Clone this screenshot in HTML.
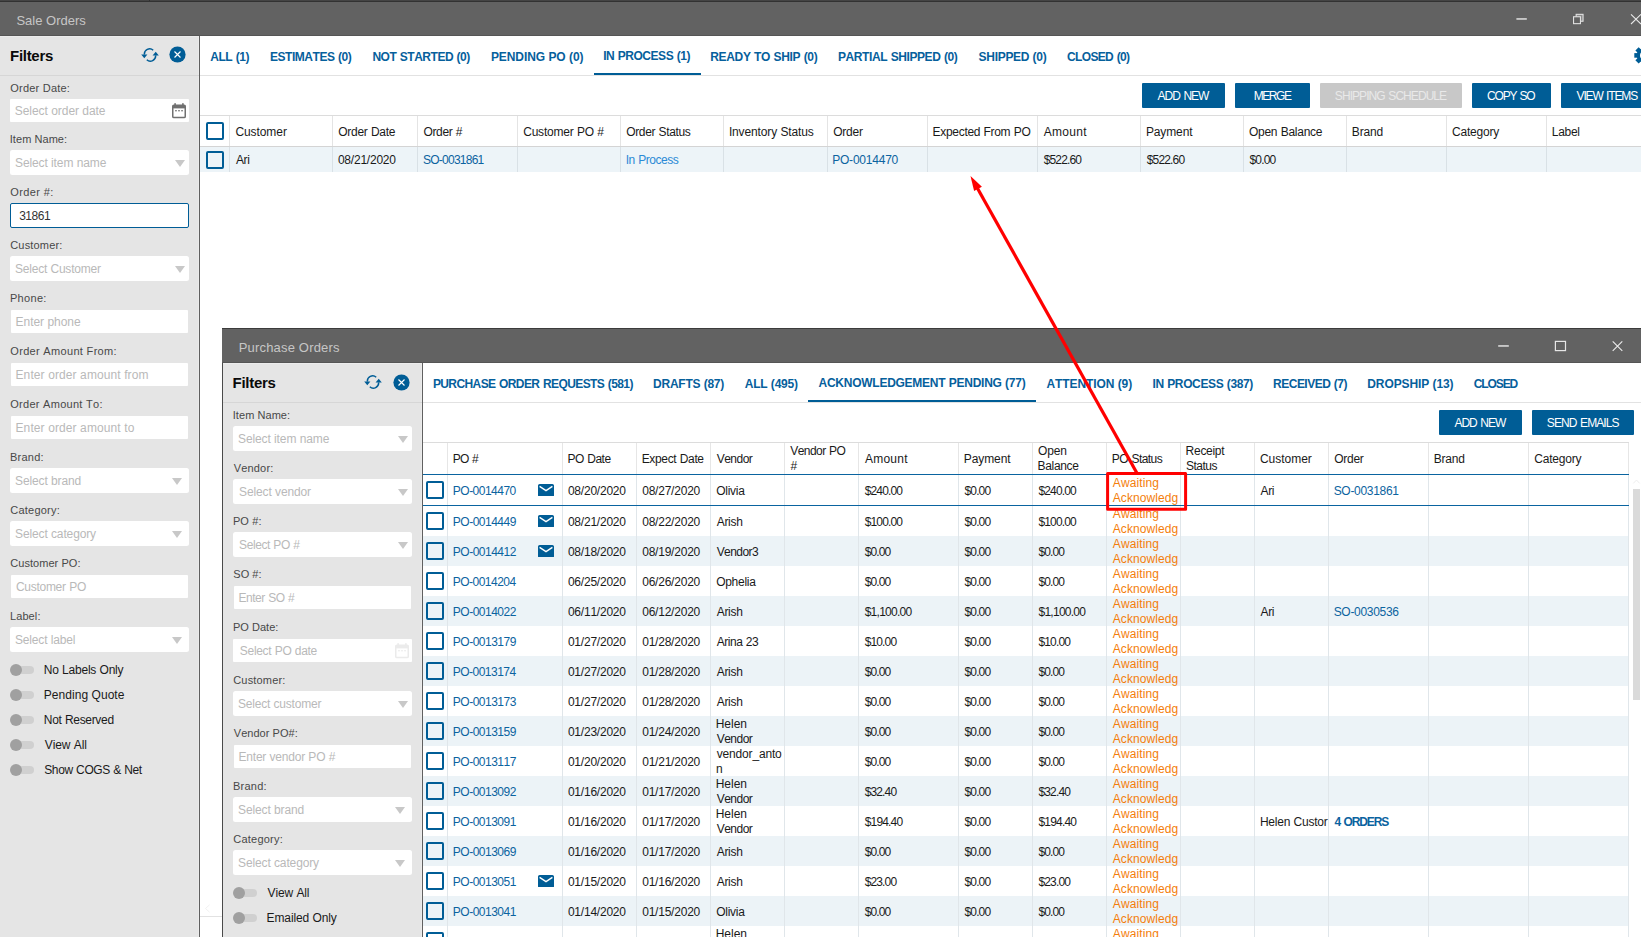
<!DOCTYPE html>
<html lang="en"><head><meta charset="utf-8"><title>Sale Orders</title>
<style>
html,body{margin:0;padding:0;background:#fff;}
body{width:1641px;height:937px;position:relative;overflow:hidden;font-family:"Liberation Sans",sans-serif;font-kerning:none;}
.t{position:absolute;white-space:nowrap;display:block;}
.b{position:absolute;display:block;box-sizing:content-box;}
</style></head>
<body>
<div class="b" style="left:0px;top:0px;width:1641px;height:1px;background:#444444;"></div>
<div class="b" style="left:0px;top:1px;width:1641px;height:1px;background:#323232;"></div>
<div class="b" style="left:149px;top:0px;width:1px;height:1px;background:#303030;"></div>
<div class="b" style="left:0px;top:2px;width:1641px;height:33px;background:#626262;"></div>
<div class="b" style="left:0px;top:35px;width:1641px;height:1px;background:#555555;"></div>
<span class="t" style="left:16.41px;top:13px;font-size:13px;line-height:16px;color:#c6c6c6;word-spacing:0.00px;">Sale Orders</span>
<svg class="b" style="left:1510px;top:8px" width="131" height="22" viewBox="0 0 131 22">
<rect x="6.4" y="10.1" width="10.4" height="1.7" fill="#d2d2d2"/>
<rect x="66.15" y="6.35" width="6.9" height="6.9" fill="#8a8a8a" stroke="#e0e0e0" stroke-width="1.1"/>
<rect x="63.55" y="8.75" width="6.9" height="6.9" fill="#626262" stroke="#e0e0e0" stroke-width="1.1"/>
<path d="M121 6.3 L131 16 M131 6.3 L121 16" stroke="#e8e8e8" stroke-width="1.1" fill="none"/>
</svg>
<div class="b" style="left:0px;top:36px;width:199px;height:901px;background:#e5e5e5;"></div>
<div class="b" style="left:0px;top:36px;width:199px;height:1px;background:#ececec;"></div>
<div class="b" style="left:198px;top:36px;width:1px;height:901px;background:#ebebeb;"></div>
<div class="b" style="left:199px;top:36px;width:1px;height:901px;background:#606060;"></div>
<div class="b" style="left:0px;top:75px;width:199px;height:1px;background:#d6d6d6;"></div>
<span class="t" style="left:10.00px;top:46px;font-size:15px;line-height:19px;color:#0a0a0a;letter-spacing:-0.283px;font-weight:700;">Filters</span>
<svg class="b" style="left:141px;top:48px" width="18" height="14" viewBox="0 0 18 14">
<path d="M3.4 6.6 A5.3 5.3 0 0 1 12.2 2.2" fill="none" stroke="#005d96" stroke-width="1.5"/>
<path d="M14.6 7.4 A5.3 5.3 0 0 1 5.8 11.8" fill="none" stroke="#005d96" stroke-width="1.5"/>
<path d="M0.2 6.6 L6.4 6.6 L3.3 10.2 Z" fill="#005d96"/>
<path d="M17.8 7.4 L11.6 7.4 L14.7 3.8 Z" fill="#005d96"/>
</svg>
<svg class="b" style="left:169.1px;top:46.1px" width="17" height="17" viewBox="0 0 17 17">
<circle cx="8.5" cy="8.5" r="8.1" fill="#005d96"/>
<path d="M5.5 5.5 L11.5 11.5 M11.5 5.5 L5.5 11.5" stroke="#fff" stroke-width="1.15" fill="none"/>
</svg>
<span class="t" style="left:10.28px;top:81px;font-size:11px;line-height:14px;color:#484848;letter-spacing:0.216px;">Order Date:</span>
<div class="b" style="left:10.2px;top:99px;width:178.9px;height:23px;background:#fff;border-radius:1px;"></div>
<span class="t" style="left:14.76px;top:104px;font-size:12px;line-height:15px;color:#b9b9b9;letter-spacing:-0.046px;word-spacing:0.06px;">Select order date</span>
<svg class="b" style="left:172px;top:102.8px" width="14" height="16" viewBox="0 0 14 16">
<rect x="0.75" y="2.2" width="12.5" height="12.4" rx="1.2" fill="none" stroke="#707070" stroke-width="1.5"/>
<rect x="0.75" y="2.2" width="12.5" height="3.2" fill="#707070"/>
<rect x="2.3" y="0.2" width="1.6" height="3" fill="#707070"/>
<rect x="10.1" y="0.2" width="1.6" height="3" fill="#707070"/>
<rect x="3.0" y="7.2" width="1.9" height="1.1" fill="#707070"/>
<rect x="6.05" y="7.2" width="1.9" height="1.1" fill="#707070"/>
<rect x="9.1" y="7.2" width="1.9" height="1.1" fill="#707070"/>
</svg>
<span class="t" style="left:9.78px;top:132px;font-size:11px;line-height:14px;color:#484848;letter-spacing:0.052px;">Item Name:</span>
<div class="b" style="left:10px;top:150.2px;width:179px;height:24.7px;background:#fff;border-radius:2.5px;"></div>
<span class="t" style="left:15.06px;top:156px;font-size:12px;line-height:15px;color:#b9b9b9;letter-spacing:-0.116px;word-spacing:0.15px;">Select item name</span>
<svg class="b" style="left:175.2px;top:160.2px" width="10" height="7" viewBox="0 0 10 7"><path d="M0 0 L10 0 L5 7 Z" fill="#c8c8c8"/></svg>
<span class="t" style="left:10.28px;top:185px;font-size:11px;line-height:14px;color:#484848;letter-spacing:0.397px;">Order #:</span>
<div class="b" style="left:10px;top:203px;width:177px;height:22.5px;background:#fff;border:1px solid #005d96;border-radius:2px;"></div>
<span class="t" style="left:19.14px;top:209px;font-size:12px;line-height:15px;color:#333;letter-spacing:-0.457px;">31861</span>
<span class="t" style="left:10.24px;top:238px;font-size:11px;line-height:14px;color:#484848;letter-spacing:0.166px;">Customer:</span>
<div class="b" style="left:10px;top:256.2px;width:179px;height:24.7px;background:#fff;border-radius:2.5px;"></div>
<span class="t" style="left:15.06px;top:262px;font-size:12px;line-height:15px;color:#b9b9b9;letter-spacing:-0.227px;word-spacing:0.33px;">Select Customer</span>
<svg class="b" style="left:175.2px;top:266.2px" width="10" height="7" viewBox="0 0 10 7"><path d="M0 0 L10 0 L5 7 Z" fill="#c8c8c8"/></svg>
<span class="t" style="left:9.90px;top:291px;font-size:11px;line-height:14px;color:#484848;letter-spacing:0.329px;">Phone:</span>
<div class="b" style="left:10.7px;top:310.2px;width:177.5px;height:23px;background:#fff;border-radius:1px;"></div>
<span class="t" style="left:15.52px;top:315px;font-size:12px;line-height:15px;color:#b9b9b9;letter-spacing:-0.031px;word-spacing:0.04px;">Enter phone</span>
<span class="t" style="left:10.28px;top:344px;font-size:11px;line-height:14px;color:#484848;letter-spacing:0.322px;">Order Amount From:</span>
<div class="b" style="left:10.7px;top:363.2px;width:177.5px;height:23px;background:#fff;border-radius:1px;"></div>
<span class="t" style="left:15.52px;top:368px;font-size:12px;line-height:15px;color:#b9b9b9;letter-spacing:0.102px;">Enter order amount from</span>
<span class="t" style="left:10.28px;top:397px;font-size:11px;line-height:14px;color:#484848;letter-spacing:0.280px;">Order Amount To:</span>
<div class="b" style="left:10.7px;top:416.2px;width:177.5px;height:23px;background:#fff;border-radius:1px;"></div>
<span class="t" style="left:15.52px;top:421px;font-size:12px;line-height:15px;color:#b9b9b9;letter-spacing:0.103px;">Enter order amount to</span>
<span class="t" style="left:9.90px;top:450px;font-size:11px;line-height:14px;color:#484848;letter-spacing:0.260px;">Brand:</span>
<div class="b" style="left:10px;top:468.2px;width:179px;height:24.7px;background:#fff;border-radius:2.5px;"></div>
<span class="t" style="left:15.06px;top:474px;font-size:12px;line-height:15px;color:#b9b9b9;letter-spacing:-0.121px;word-spacing:0.17px;">Select brand</span>
<svg class="b" style="left:171.5px;top:478.2px" width="10" height="7" viewBox="0 0 10 7"><path d="M0 0 L10 0 L5 7 Z" fill="#c8c8c8"/></svg>
<span class="t" style="left:10.24px;top:503px;font-size:11px;line-height:14px;color:#484848;letter-spacing:0.234px;">Category:</span>
<div class="b" style="left:10px;top:521.2px;width:179px;height:24.7px;background:#fff;border-radius:2.5px;"></div>
<span class="t" style="left:15.06px;top:527px;font-size:12px;line-height:15px;color:#b9b9b9;letter-spacing:-0.131px;word-spacing:0.19px;">Select category</span>
<svg class="b" style="left:171.5px;top:531.2px" width="10" height="7" viewBox="0 0 10 7"><path d="M0 0 L10 0 L5 7 Z" fill="#c8c8c8"/></svg>
<span class="t" style="left:10.24px;top:556px;font-size:11px;line-height:14px;color:#484848;letter-spacing:0.053px;">Customer PO:</span>
<div class="b" style="left:10.7px;top:575px;width:177.5px;height:23px;background:#fff;border-radius:1px;"></div>
<span class="t" style="left:15.89px;top:580px;font-size:12px;line-height:15px;color:#b9b9b9;letter-spacing:-0.267px;word-spacing:0.37px;">Customer PO</span>
<span class="t" style="left:9.90px;top:609px;font-size:11px;line-height:14px;color:#484848;letter-spacing:0.127px;">Label:</span>
<div class="b" style="left:10px;top:627.3px;width:179px;height:24.7px;background:#fff;border-radius:2.5px;"></div>
<span class="t" style="left:15.06px;top:633px;font-size:12px;line-height:15px;color:#b9b9b9;letter-spacing:-0.176px;word-spacing:0.25px;">Select label</span>
<svg class="b" style="left:171.5px;top:637.3px" width="10" height="7" viewBox="0 0 10 7"><path d="M0 0 L10 0 L5 7 Z" fill="#c8c8c8"/></svg>
<div class="b" style="left:14px;top:666px;width:20px;height:8px;background:#d0d0d0;border-radius:4px;"></div>
<div class="b" style="left:10px;top:664px;width:12px;height:12px;background:#a0a0a0;border-radius:6px;"></div>
<span class="t" style="left:43.82px;top:663px;font-size:12px;line-height:15px;color:#1a1a1a;letter-spacing:-0.224px;word-spacing:0.29px;">No Labels Only</span>
<div class="b" style="left:14px;top:691px;width:20px;height:8px;background:#d0d0d0;border-radius:4px;"></div>
<div class="b" style="left:10px;top:689px;width:12px;height:12px;background:#a0a0a0;border-radius:6px;"></div>
<span class="t" style="left:43.82px;top:688px;font-size:12px;line-height:15px;color:#1a1a1a;letter-spacing:0.046px;">Pending Quote</span>
<div class="b" style="left:14px;top:716px;width:20px;height:8px;background:#d0d0d0;border-radius:4px;"></div>
<div class="b" style="left:10px;top:714px;width:12px;height:12px;background:#a0a0a0;border-radius:6px;"></div>
<span class="t" style="left:43.82px;top:713px;font-size:12px;line-height:15px;color:#1a1a1a;letter-spacing:-0.324px;word-spacing:0.45px;">Not Reserved</span>
<div class="b" style="left:14px;top:741px;width:20px;height:8px;background:#d0d0d0;border-radius:4px;"></div>
<div class="b" style="left:10px;top:739px;width:12px;height:12px;background:#a0a0a0;border-radius:6px;"></div>
<span class="t" style="left:44.75px;top:738px;font-size:12px;line-height:15px;color:#1a1a1a;letter-spacing:-0.092px;word-spacing:0.12px;">View All</span>
<div class="b" style="left:14px;top:766px;width:20px;height:8px;background:#d0d0d0;border-radius:4px;"></div>
<div class="b" style="left:10px;top:764px;width:12px;height:12px;background:#a0a0a0;border-radius:6px;"></div>
<span class="t" style="left:44.26px;top:763px;font-size:12px;line-height:15px;color:#1a1a1a;letter-spacing:-0.393px;word-spacing:0.47px;">Show COGS &amp; Net</span>
<div class="b" style="left:200px;top:75px;width:1441px;height:1px;background:#e2e2e2;"></div>
<span class="t" style="left:210.30px;top:50px;font-size:12px;line-height:15px;color:#06609c;letter-spacing:-0.471px;word-spacing:0.59px;font-weight:700;">ALL (1)</span>
<span class="t" style="left:270.00px;top:50px;font-size:12px;line-height:15px;color:#06609c;letter-spacing:-0.460px;word-spacing:0.65px;font-weight:700;">ESTIMATES (0)</span>
<span class="t" style="left:372.40px;top:50px;font-size:12px;line-height:15px;color:#06609c;letter-spacing:-0.476px;word-spacing:0.62px;font-weight:700;">NOT STARTED (0)</span>
<span class="t" style="left:490.90px;top:50px;font-size:12px;line-height:15px;color:#06609c;letter-spacing:-0.071px;word-spacing:0.09px;font-weight:700;">PENDING PO (0)</span>
<span class="t" style="left:710.20px;top:50px;font-size:12px;line-height:15px;color:#06609c;letter-spacing:-0.312px;word-spacing:0.38px;font-weight:700;">READY TO SHIP (0)</span>
<span class="t" style="left:838.00px;top:50px;font-size:12px;line-height:15px;color:#06609c;letter-spacing:-0.406px;word-spacing:0.55px;font-weight:700;">PARTIAL SHIPPED (0)</span>
<span class="t" style="left:978.55px;top:50px;font-size:12px;line-height:15px;color:#06609c;letter-spacing:-0.294px;word-spacing:0.41px;font-weight:700;">SHIPPED (0)</span>
<span class="t" style="left:1067.01px;top:50px;font-size:12px;line-height:15px;color:#06609c;letter-spacing:-0.643px;word-spacing:0.87px;font-weight:700;">CLOSED (0)</span>
<span class="t" style="left:603.20px;top:49px;font-size:12px;line-height:15px;color:#06609c;letter-spacing:-0.462px;word-spacing:0.59px;font-weight:700;">IN PROCESS (1)</span>
<div class="b" style="left:594px;top:72.6px;width:106.5px;height:2.6px;background:#005d96;"></div>
<svg class="b" style="left:1633px;top:45px" width="8" height="21" viewBox="0 0 8 21">
<g transform="translate(10.6,10.4)" fill="#005d96">
<circle r="6.9"/>
<g id="gt"><rect x="-2.3" y="-9.3" width="4.6" height="4" /></g>
<use href="#gt" transform="rotate(45)"/><use href="#gt" transform="rotate(90)"/><use href="#gt" transform="rotate(135)"/>
<use href="#gt" transform="rotate(180)"/><use href="#gt" transform="rotate(225)"/><use href="#gt" transform="rotate(270)"/><use href="#gt" transform="rotate(315)"/>
<circle r="3.6" fill="#fff"/>
</g></svg>
<div class="b" style="left:1142px;top:83.2px;width:83px;height:24.6px;background:#005d96;border-radius:1px;"></div>
<span class="t" style="left:1157.58px;top:89px;font-size:12px;line-height:15px;color:#fff;letter-spacing:-1.000px;word-spacing:1.20px;">ADD NEW</span>
<div class="b" style="left:1235px;top:83.2px;width:75px;height:24.6px;background:#005d96;border-radius:1px;"></div>
<span class="t" style="left:1253.72px;top:89px;font-size:12px;line-height:15px;color:#fff;letter-spacing:-1.451px;">MERGE</span>
<div class="b" style="left:1320px;top:83.2px;width:142px;height:24.6px;background:#c8c8c8;border-radius:1px;"></div>
<span class="t" style="left:1334.86px;top:89px;font-size:12px;line-height:15px;color:#e9e9e9;letter-spacing:-0.936px;word-spacing:1.20px;">SHIPPING SCHEDULE</span>
<div class="b" style="left:1472px;top:83.2px;width:79px;height:24.6px;background:#005d96;border-radius:1px;"></div>
<span class="t" style="left:1487.09px;top:89px;font-size:12px;line-height:15px;color:#fff;letter-spacing:-1.216px;word-spacing:1.20px;">COPY SO</span>
<div class="b" style="left:1561px;top:83.2px;width:92px;height:24.6px;background:#005d96;border-radius:1px;"></div>
<span class="t" style="left:1576.55px;top:89px;font-size:12px;line-height:15px;color:#fff;letter-spacing:-1.141px;word-spacing:1.20px;">VIEW ITEMS</span>
<div class="b" style="left:200px;top:115px;width:1441px;height:1px;background:#dcdcdc;"></div>
<div class="b" style="left:200px;top:146px;width:1441px;height:1px;background:#d4d4d4;"></div>
<div class="b" style="left:200px;top:147px;width:1441px;height:24.6px;background:#edf4f8;"></div>
<div class="b" style="left:229.4px;top:116px;width:1px;height:30px;background:#e4e4e4;"></div>
<div class="b" style="left:229.4px;top:147px;width:1px;height:24.6px;background:#d9e1e6;"></div>
<div class="b" style="left:332.4px;top:116px;width:1px;height:30px;background:#e4e4e4;"></div>
<div class="b" style="left:332.4px;top:147px;width:1px;height:24.6px;background:#d9e1e6;"></div>
<div class="b" style="left:417.4px;top:116px;width:1px;height:30px;background:#e4e4e4;"></div>
<div class="b" style="left:417.4px;top:147px;width:1px;height:24.6px;background:#d9e1e6;"></div>
<div class="b" style="left:517.4px;top:116px;width:1px;height:30px;background:#e4e4e4;"></div>
<div class="b" style="left:517.4px;top:147px;width:1px;height:24.6px;background:#d9e1e6;"></div>
<div class="b" style="left:620.4px;top:116px;width:1px;height:30px;background:#e4e4e4;"></div>
<div class="b" style="left:620.4px;top:147px;width:1px;height:24.6px;background:#d9e1e6;"></div>
<div class="b" style="left:723.4px;top:116px;width:1px;height:30px;background:#e4e4e4;"></div>
<div class="b" style="left:723.4px;top:147px;width:1px;height:24.6px;background:#d9e1e6;"></div>
<div class="b" style="left:827.4px;top:116px;width:1px;height:30px;background:#e4e4e4;"></div>
<div class="b" style="left:827.4px;top:147px;width:1px;height:24.6px;background:#d9e1e6;"></div>
<div class="b" style="left:927.4px;top:116px;width:1px;height:30px;background:#e4e4e4;"></div>
<div class="b" style="left:927.4px;top:147px;width:1px;height:24.6px;background:#d9e1e6;"></div>
<div class="b" style="left:1037.4px;top:116px;width:1px;height:30px;background:#e4e4e4;"></div>
<div class="b" style="left:1037.4px;top:147px;width:1px;height:24.6px;background:#d9e1e6;"></div>
<div class="b" style="left:1140.4px;top:116px;width:1px;height:30px;background:#e4e4e4;"></div>
<div class="b" style="left:1140.4px;top:147px;width:1px;height:24.6px;background:#d9e1e6;"></div>
<div class="b" style="left:1243.4px;top:116px;width:1px;height:30px;background:#e4e4e4;"></div>
<div class="b" style="left:1243.4px;top:147px;width:1px;height:24.6px;background:#d9e1e6;"></div>
<div class="b" style="left:1346.4px;top:116px;width:1px;height:30px;background:#e4e4e4;"></div>
<div class="b" style="left:1346.4px;top:147px;width:1px;height:24.6px;background:#d9e1e6;"></div>
<div class="b" style="left:1446.4px;top:116px;width:1px;height:30px;background:#e4e4e4;"></div>
<div class="b" style="left:1446.4px;top:147px;width:1px;height:24.6px;background:#d9e1e6;"></div>
<div class="b" style="left:1546.4px;top:116px;width:1px;height:30px;background:#e4e4e4;"></div>
<div class="b" style="left:1546.4px;top:147px;width:1px;height:24.6px;background:#d9e1e6;"></div>
<div class="b" style="left:206px;top:122px;width:14px;height:14px;border:2px solid #005d96;border-radius:2px;"></div>
<div class="b" style="left:206px;top:151px;width:14px;height:14px;border:2px solid #005d96;border-radius:2px;"></div>
<span class="t" style="left:235.39px;top:125px;font-size:12px;line-height:15px;color:#1a1a1a;letter-spacing:-0.072px;">Customer</span>
<span class="t" style="left:338.33px;top:125px;font-size:12px;line-height:15px;color:#1a1a1a;letter-spacing:-0.295px;word-spacing:0.40px;">Order Date</span>
<span class="t" style="left:423.43px;top:125px;font-size:12px;line-height:15px;color:#1a1a1a;letter-spacing:-0.328px;word-spacing:0.41px;">Order #</span>
<span class="t" style="left:523.19px;top:125px;font-size:12px;line-height:15px;color:#1a1a1a;letter-spacing:-0.214px;word-spacing:0.27px;">Customer PO #</span>
<span class="t" style="left:626.23px;top:125px;font-size:12px;line-height:15px;color:#1a1a1a;letter-spacing:-0.357px;word-spacing:0.50px;">Order Status</span>
<span class="t" style="left:728.89px;top:125px;font-size:12px;line-height:15px;color:#1a1a1a;letter-spacing:-0.138px;word-spacing:0.20px;">Inventory Status</span>
<span class="t" style="left:833.13px;top:125px;font-size:12px;line-height:15px;color:#1a1a1a;letter-spacing:-0.227px;">Order</span>
<span class="t" style="left:932.62px;top:125px;font-size:12px;line-height:15px;color:#1a1a1a;letter-spacing:-0.314px;word-spacing:0.41px;">Expected From PO</span>
<span class="t" style="left:1043.78px;top:125px;font-size:12px;line-height:15px;color:#1a1a1a;letter-spacing:0.271px;">Amount</span>
<span class="t" style="left:1145.92px;top:125px;font-size:12px;line-height:15px;color:#1a1a1a;letter-spacing:-0.114px;">Payment</span>
<span class="t" style="left:1249.03px;top:125px;font-size:12px;line-height:15px;color:#1a1a1a;letter-spacing:-0.276px;word-spacing:0.39px;">Open Balance</span>
<span class="t" style="left:1351.82px;top:125px;font-size:12px;line-height:15px;color:#1a1a1a;letter-spacing:-0.191px;">Brand</span>
<span class="t" style="left:1451.99px;top:125px;font-size:12px;line-height:15px;color:#1a1a1a;letter-spacing:-0.194px;">Category</span>
<span class="t" style="left:1551.82px;top:125px;font-size:12px;line-height:15px;color:#1a1a1a;letter-spacing:-0.294px;">Label</span>
<span class="t" style="left:235.98px;top:153px;font-size:12px;line-height:15px;color:#1a1a1a;letter-spacing:-0.417px;">Ari</span>
<span class="t" style="left:337.93px;top:153px;font-size:12px;line-height:15px;color:#1a1a1a;letter-spacing:-0.225px;">08/21/2020</span>
<span class="t" style="left:423.06px;top:153px;font-size:12px;line-height:15px;color:#0b63a0;letter-spacing:-0.758px;">SO-0031861</span>
<span class="t" style="left:625.69px;top:153px;font-size:12px;line-height:15px;color:#2b8ad6;letter-spacing:-0.477px;word-spacing:0.65px;">In Process</span>
<span class="t" style="left:832.22px;top:153px;font-size:12px;line-height:15px;color:#0b63a0;letter-spacing:-0.222px;">PO-0014470</span>
<span class="t" style="left:1043.67px;top:153px;font-size:12px;line-height:15px;color:#1a1a1a;letter-spacing:-0.847px;">$522.60</span>
<span class="t" style="left:1146.77px;top:153px;font-size:12px;line-height:15px;color:#1a1a1a;letter-spacing:-0.847px;">$522.60</span>
<span class="t" style="left:1249.47px;top:153px;font-size:12px;line-height:15px;color:#1a1a1a;letter-spacing:-0.808px;">$0.00</span>
<div class="b" style="left:200px;top:916px;width:22px;height:1px;background:#e2e2e2;"></div>
<svg class="b" style="left:204px;top:904px" width="7" height="9" viewBox="0 0 7 9"><path d="M5.6 0.8 L1.5 4.5 L5.6 8.2" fill="none" stroke="#f1f1f1" stroke-width="1"/></svg>
<div class="b" style="left:222px;top:328px;width:1419px;height:609px;background:#fff;"></div>
<div class="b" style="left:222px;top:328px;width:1px;height:609px;background:#4a4a4a;"></div>
<div class="b" style="left:222px;top:328px;width:1419px;height:34px;background:#626262;border-top:1px solid #3c3c3c;box-sizing:border-box;"></div>
<div class="b" style="left:222px;top:362px;width:1419px;height:1px;background:#555555;"></div>
<span class="t" style="left:238.73px;top:340px;font-size:13px;line-height:16px;color:#c6c6c6;letter-spacing:0.177px;">Purchase Orders</span>
<svg class="b" style="left:1490px;top:336px" width="140" height="20" viewBox="0 0 140 20">
<rect x="8.2" y="9.1" width="10.6" height="1.7" fill="#d2d2d2"/>
<rect x="65.4" y="5.4" width="10.1" height="9.2" fill="none" stroke="#e6e6e6" stroke-width="1.2"/>
<path d="M122.7 5.3 L132.3 14.9 M132.3 5.3 L122.7 14.9" stroke="#ececec" stroke-width="1.1" fill="none"/>
</svg>
<div class="b" style="left:223px;top:363px;width:199px;height:574px;background:#e5e5e5;"></div>
<div class="b" style="left:223px;top:363px;width:199px;height:1px;background:#ececec;"></div>
<div class="b" style="left:421px;top:363px;width:1px;height:574px;background:#ebebeb;"></div>
<div class="b" style="left:422px;top:363px;width:1px;height:574px;background:#606060;"></div>
<div class="b" style="left:223px;top:402px;width:199px;height:1px;background:#d6d6d6;"></div>
<span class="t" style="left:232.60px;top:373px;font-size:15px;line-height:19px;color:#0a0a0a;letter-spacing:-0.283px;font-weight:700;">Filters</span>
<svg class="b" style="left:364.2px;top:375.2px" width="18" height="14" viewBox="0 0 18 14">
<path d="M3.4 6.6 A5.3 5.3 0 0 1 12.2 2.2" fill="none" stroke="#005d96" stroke-width="1.5"/>
<path d="M14.6 7.4 A5.3 5.3 0 0 1 5.8 11.8" fill="none" stroke="#005d96" stroke-width="1.5"/>
<path d="M0.2 6.6 L6.4 6.6 L3.3 10.2 Z" fill="#005d96"/>
<path d="M17.8 7.4 L11.6 7.4 L14.7 3.8 Z" fill="#005d96"/>
</svg>
<svg class="b" style="left:392.8px;top:373.6px" width="17" height="17" viewBox="0 0 17 17">
<circle cx="8.5" cy="8.5" r="8.1" fill="#005d96"/>
<path d="M5.5 5.5 L11.5 11.5 M11.5 5.5 L5.5 11.5" stroke="#fff" stroke-width="1.15" fill="none"/>
</svg>
<span class="t" style="left:232.78px;top:408px;font-size:11px;line-height:14px;color:#484848;letter-spacing:0.052px;">Item Name:</span>
<div class="b" style="left:233px;top:426px;width:179px;height:24.7px;background:#fff;border-radius:2.5px;"></div>
<span class="t" style="left:238.06px;top:432px;font-size:12px;line-height:15px;color:#b9b9b9;letter-spacing:-0.116px;word-spacing:0.15px;">Select item name</span>
<svg class="b" style="left:398.2px;top:436px" width="10" height="7" viewBox="0 0 10 7"><path d="M0 0 L10 0 L5 7 Z" fill="#c8c8c8"/></svg>
<span class="t" style="left:233.75px;top:461px;font-size:11px;line-height:14px;color:#484848;letter-spacing:0.171px;">Vendor:</span>
<div class="b" style="left:233px;top:479.2px;width:179px;height:24.7px;background:#fff;border-radius:2.5px;"></div>
<span class="t" style="left:239.06px;top:485px;font-size:12px;line-height:15px;color:#b9b9b9;letter-spacing:-0.126px;word-spacing:0.18px;">Select vendor</span>
<svg class="b" style="left:398.2px;top:489.2px" width="10" height="7" viewBox="0 0 10 7"><path d="M0 0 L10 0 L5 7 Z" fill="#c8c8c8"/></svg>
<span class="t" style="left:232.90px;top:514px;font-size:11px;line-height:14px;color:#484848;letter-spacing:0.121px;">PO #:</span>
<div class="b" style="left:233px;top:532.2px;width:179px;height:24.7px;background:#fff;border-radius:2.5px;"></div>
<span class="t" style="left:239.06px;top:538px;font-size:12px;line-height:15px;color:#b9b9b9;letter-spacing:-0.413px;word-spacing:0.50px;">Select PO #</span>
<svg class="b" style="left:398.2px;top:542.2px" width="10" height="7" viewBox="0 0 10 7"><path d="M0 0 L10 0 L5 7 Z" fill="#c8c8c8"/></svg>
<span class="t" style="left:233.30px;top:567px;font-size:11px;line-height:14px;color:#484848;letter-spacing:0.020px;">SO #:</span>
<div class="b" style="left:233.7px;top:586px;width:177.5px;height:23px;background:#fff;border-radius:1px;"></div>
<span class="t" style="left:238.52px;top:591px;font-size:12px;line-height:15px;color:#b9b9b9;letter-spacing:-0.485px;word-spacing:0.57px;">Enter SO #</span>
<span class="t" style="left:232.90px;top:620px;font-size:11px;line-height:14px;color:#484848;letter-spacing:0.038px;">PO Date:</span>
<div class="b" style="left:233.2px;top:639px;width:178.9px;height:23px;background:#fff;border-radius:1px;"></div>
<span class="t" style="left:239.86px;top:644px;font-size:12px;line-height:15px;color:#b9b9b9;letter-spacing:-0.320px;word-spacing:0.41px;">Select PO date</span>
<svg class="b" style="left:395px;top:642.8px" width="14" height="16" viewBox="0 0 14 16">
<rect x="0.75" y="2.2" width="12.5" height="12.4" rx="1.2" fill="none" stroke="#ebebeb" stroke-width="1.5"/>
<rect x="0.75" y="2.2" width="12.5" height="3.2" fill="#ebebeb"/>
<rect x="2.3" y="0.2" width="1.6" height="3" fill="#ebebeb"/>
<rect x="10.1" y="0.2" width="1.6" height="3" fill="#ebebeb"/>
<rect x="3.0" y="7.2" width="1.9" height="1.1" fill="#ebebeb"/>
<rect x="6.05" y="7.2" width="1.9" height="1.1" fill="#ebebeb"/>
<rect x="9.1" y="7.2" width="1.9" height="1.1" fill="#ebebeb"/>
</svg>
<span class="t" style="left:233.24px;top:673px;font-size:11px;line-height:14px;color:#484848;letter-spacing:0.166px;">Customer:</span>
<div class="b" style="left:233px;top:691.3px;width:179px;height:24.7px;background:#fff;border-radius:2.5px;"></div>
<span class="t" style="left:238.06px;top:697px;font-size:12px;line-height:15px;color:#b9b9b9;letter-spacing:-0.214px;word-spacing:0.31px;">Select customer</span>
<svg class="b" style="left:398.2px;top:701.3px" width="10" height="7" viewBox="0 0 10 7"><path d="M0 0 L10 0 L5 7 Z" fill="#c8c8c8"/></svg>
<span class="t" style="left:233.75px;top:726px;font-size:11px;line-height:14px;color:#484848;letter-spacing:0.046px;">Vendor PO#:</span>
<div class="b" style="left:233.7px;top:745px;width:177.5px;height:23px;background:#fff;border-radius:1px;"></div>
<span class="t" style="left:238.52px;top:750px;font-size:12px;line-height:15px;color:#b9b9b9;letter-spacing:-0.207px;word-spacing:0.25px;">Enter vendor PO #</span>
<span class="t" style="left:232.90px;top:779px;font-size:11px;line-height:14px;color:#484848;letter-spacing:0.260px;">Brand:</span>
<div class="b" style="left:233px;top:797.4px;width:179px;height:24.7px;background:#fff;border-radius:2.5px;"></div>
<span class="t" style="left:238.06px;top:803px;font-size:12px;line-height:15px;color:#b9b9b9;letter-spacing:-0.121px;word-spacing:0.17px;">Select brand</span>
<svg class="b" style="left:394.5px;top:807.4px" width="10" height="7" viewBox="0 0 10 7"><path d="M0 0 L10 0 L5 7 Z" fill="#c8c8c8"/></svg>
<span class="t" style="left:233.24px;top:832px;font-size:11px;line-height:14px;color:#484848;letter-spacing:0.234px;">Category:</span>
<div class="b" style="left:233px;top:850.3px;width:179px;height:24.7px;background:#fff;border-radius:2.5px;"></div>
<span class="t" style="left:238.06px;top:856px;font-size:12px;line-height:15px;color:#b9b9b9;letter-spacing:-0.131px;word-spacing:0.19px;">Select category</span>
<svg class="b" style="left:394.5px;top:860.3px" width="10" height="7" viewBox="0 0 10 7"><path d="M0 0 L10 0 L5 7 Z" fill="#c8c8c8"/></svg>
<div class="b" style="left:237px;top:889px;width:20px;height:8px;background:#d0d0d0;border-radius:4px;"></div>
<div class="b" style="left:233px;top:887px;width:12px;height:12px;background:#a0a0a0;border-radius:6px;"></div>
<span class="t" style="left:267.55px;top:886px;font-size:12px;line-height:15px;color:#1a1a1a;letter-spacing:-0.127px;word-spacing:0.17px;">View All</span>
<div class="b" style="left:237px;top:914px;width:20px;height:8px;background:#d0d0d0;border-radius:4px;"></div>
<div class="b" style="left:233px;top:912px;width:12px;height:12px;background:#a0a0a0;border-radius:6px;"></div>
<span class="t" style="left:266.62px;top:911px;font-size:12px;line-height:15px;color:#1a1a1a;letter-spacing:-0.120px;word-spacing:0.17px;">Emailed Only</span>
<div class="b" style="left:423px;top:402px;width:1218px;height:1px;background:#e2e2e2;"></div>
<span class="t" style="left:432.90px;top:377px;font-size:12px;line-height:15px;color:#06609c;letter-spacing:-0.594px;word-spacing:0.81px;font-weight:700;">PURCHASE ORDER REQUESTS (581)</span>
<span class="t" style="left:653.10px;top:377px;font-size:12px;line-height:15px;color:#06609c;letter-spacing:-0.248px;word-spacing:0.34px;font-weight:700;">DRAFTS (87)</span>
<span class="t" style="left:744.80px;top:377px;font-size:12px;line-height:15px;color:#06609c;letter-spacing:-0.222px;word-spacing:0.30px;font-weight:700;">ALL (495)</span>
<span class="t" style="left:1046.40px;top:377px;font-size:12px;line-height:15px;color:#06609c;letter-spacing:-0.082px;word-spacing:0.12px;font-weight:700;">ATTENTION (9)</span>
<span class="t" style="left:1152.50px;top:377px;font-size:12px;line-height:15px;color:#06609c;letter-spacing:-0.369px;word-spacing:0.49px;font-weight:700;">IN PROCESS (387)</span>
<span class="t" style="left:1273.10px;top:377px;font-size:12px;line-height:15px;color:#06609c;letter-spacing:-0.515px;word-spacing:0.72px;font-weight:700;">RECEIVED (7)</span>
<span class="t" style="left:1367.30px;top:377px;font-size:12px;line-height:15px;color:#06609c;letter-spacing:-0.099px;word-spacing:0.14px;font-weight:700;">DROPSHIP (13)</span>
<span class="t" style="left:1473.71px;top:377px;font-size:12px;line-height:15px;color:#06609c;letter-spacing:-1.102px;font-weight:700;">CLOSED</span>
<span class="t" style="left:818.50px;top:376px;font-size:12px;line-height:15px;color:#06609c;letter-spacing:-0.254px;word-spacing:0.36px;font-weight:700;">ACKNOWLEDGEMENT PENDING (77)</span>
<div class="b" style="left:808.2px;top:399.8px;width:227.7px;height:2.6px;background:#005d96;"></div>
<div class="b" style="left:1439.2px;top:410.1px;width:82.8px;height:24.6px;background:#005d96;border-radius:1px;"></div>
<span class="t" style="left:1454.38px;top:416px;font-size:12px;line-height:15px;color:#fff;letter-spacing:-1.000px;word-spacing:1.20px;">ADD NEW</span>
<div class="b" style="left:1532px;top:410.1px;width:101.9px;height:24.6px;background:#005d96;border-radius:1px;"></div>
<span class="t" style="left:1546.86px;top:416px;font-size:12px;line-height:15px;color:#fff;letter-spacing:-0.929px;word-spacing:1.20px;">SEND EMAILS</span>
<div class="b" style="left:423px;top:442px;width:1206px;height:1px;background:#dcdcdc;"></div>
<div class="b" style="left:423px;top:536px;width:1205.5px;height:30px;background:#ecf3f7;"></div>
<div class="b" style="left:423px;top:596px;width:1205.5px;height:30px;background:#ecf3f7;"></div>
<div class="b" style="left:423px;top:656px;width:1205.5px;height:30px;background:#ecf3f7;"></div>
<div class="b" style="left:423px;top:716px;width:1205.5px;height:30px;background:#ecf3f7;"></div>
<div class="b" style="left:423px;top:776px;width:1205.5px;height:30px;background:#ecf3f7;"></div>
<div class="b" style="left:423px;top:836px;width:1205.5px;height:30px;background:#ecf3f7;"></div>
<div class="b" style="left:423px;top:896px;width:1205.5px;height:30px;background:#ecf3f7;"></div>
<div class="b" style="left:447.4px;top:443px;width:1px;height:31px;background:#e6e6e6;"></div>
<div class="b" style="left:447.4px;top:475px;width:1px;height:462px;background:#e0e6ea;"></div>
<div class="b" style="left:562.4px;top:443px;width:1px;height:31px;background:#e6e6e6;"></div>
<div class="b" style="left:562.4px;top:475px;width:1px;height:462px;background:#e0e6ea;"></div>
<div class="b" style="left:636.4px;top:443px;width:1px;height:31px;background:#e6e6e6;"></div>
<div class="b" style="left:636.4px;top:475px;width:1px;height:462px;background:#e0e6ea;"></div>
<div class="b" style="left:710.4px;top:443px;width:1px;height:31px;background:#e6e6e6;"></div>
<div class="b" style="left:710.4px;top:475px;width:1px;height:462px;background:#e0e6ea;"></div>
<div class="b" style="left:784.4px;top:443px;width:1px;height:31px;background:#e6e6e6;"></div>
<div class="b" style="left:784.4px;top:475px;width:1px;height:462px;background:#e0e6ea;"></div>
<div class="b" style="left:858.4px;top:443px;width:1px;height:31px;background:#e6e6e6;"></div>
<div class="b" style="left:858.4px;top:475px;width:1px;height:462px;background:#e0e6ea;"></div>
<div class="b" style="left:958.4px;top:443px;width:1px;height:31px;background:#e6e6e6;"></div>
<div class="b" style="left:958.4px;top:475px;width:1px;height:462px;background:#e0e6ea;"></div>
<div class="b" style="left:1032.4px;top:443px;width:1px;height:31px;background:#e6e6e6;"></div>
<div class="b" style="left:1032.4px;top:475px;width:1px;height:462px;background:#e0e6ea;"></div>
<div class="b" style="left:1106.4px;top:443px;width:1px;height:31px;background:#e6e6e6;"></div>
<div class="b" style="left:1106.4px;top:475px;width:1px;height:462px;background:#e0e6ea;"></div>
<div class="b" style="left:1180.4px;top:443px;width:1px;height:31px;background:#e6e6e6;"></div>
<div class="b" style="left:1180.4px;top:475px;width:1px;height:462px;background:#e0e6ea;"></div>
<div class="b" style="left:1254.4px;top:443px;width:1px;height:31px;background:#e6e6e6;"></div>
<div class="b" style="left:1254.4px;top:475px;width:1px;height:462px;background:#e0e6ea;"></div>
<div class="b" style="left:1328.4px;top:443px;width:1px;height:31px;background:#e6e6e6;"></div>
<div class="b" style="left:1328.4px;top:475px;width:1px;height:462px;background:#e0e6ea;"></div>
<div class="b" style="left:1428.4px;top:443px;width:1px;height:31px;background:#e6e6e6;"></div>
<div class="b" style="left:1428.4px;top:475px;width:1px;height:462px;background:#e0e6ea;"></div>
<div class="b" style="left:1528.4px;top:443px;width:1px;height:31px;background:#e6e6e6;"></div>
<div class="b" style="left:1528.4px;top:475px;width:1px;height:462px;background:#e0e6ea;"></div>
<div class="b" style="left:1628.4px;top:443px;width:1px;height:31px;background:#e6e6e6;"></div>
<div class="b" style="left:1628.4px;top:475px;width:1px;height:462px;background:#e0e6ea;"></div>
<div class="b" style="left:423px;top:474px;width:1206px;height:1.2px;background:#0a64a0;"></div>
<div class="b" style="left:423px;top:505px;width:1206px;height:1.2px;background:#0a64a0;"></div>
<div class="b" style="left:1633px;top:489px;width:7px;height:210.5px;background:#dadada;"></div>
<svg class="b" style="left:1632px;top:478px" width="9" height="7" viewBox="0 0 9 7"><path d="M1.3 5.4 L4.5 2.0 L7.7 5.4" fill="none" stroke="#eeeeee" stroke-width="1"/></svg>
<span class="t" style="left:452.82px;top:452px;font-size:12px;line-height:15px;color:#1a1a1a;letter-spacing:-0.717px;word-spacing:0.75px;">PO #</span>
<span class="t" style="left:567.42px;top:452px;font-size:12px;line-height:15px;color:#1a1a1a;letter-spacing:-0.486px;word-spacing:0.61px;">PO Date</span>
<span class="t" style="left:641.72px;top:452px;font-size:12px;line-height:15px;color:#1a1a1a;letter-spacing:-0.354px;word-spacing:0.49px;">Expect Date</span>
<span class="t" style="left:716.65px;top:452px;font-size:12px;line-height:15px;color:#1a1a1a;letter-spacing:-0.509px;">Vendor</span>
<span class="t" style="left:864.88px;top:452px;font-size:12px;line-height:15px;color:#1a1a1a;letter-spacing:0.271px;">Amount</span>
<span class="t" style="left:963.82px;top:452px;font-size:12px;line-height:15px;color:#1a1a1a;letter-spacing:-0.097px;">Payment</span>
<span class="t" style="left:1111.82px;top:452px;font-size:12px;line-height:15px;color:#1a1a1a;letter-spacing:-0.566px;word-spacing:0.75px;">PO Status</span>
<span class="t" style="left:1259.99px;top:452px;font-size:12px;line-height:15px;color:#1a1a1a;letter-spacing:-0.029px;">Customer</span>
<span class="t" style="left:1334.23px;top:452px;font-size:12px;line-height:15px;color:#1a1a1a;letter-spacing:-0.277px;">Order</span>
<span class="t" style="left:1433.72px;top:452px;font-size:12px;line-height:15px;color:#1a1a1a;letter-spacing:-0.191px;">Brand</span>
<span class="t" style="left:1534.19px;top:452px;font-size:12px;line-height:15px;color:#1a1a1a;letter-spacing:-0.194px;">Category</span>
<span class="t" style="left:790.35px;top:444px;font-size:12px;line-height:15px;color:#1a1a1a;letter-spacing:-0.576px;word-spacing:0.77px;">Vendor PO</span>
<span class="t" style="left:790.55px;top:459px;font-size:12px;line-height:15px;color:#1a1a1a;">#</span>
<span class="t" style="left:1038.03px;top:444px;font-size:12px;line-height:15px;color:#1a1a1a;letter-spacing:-0.169px;">Open</span>
<span class="t" style="left:1037.62px;top:459px;font-size:12px;line-height:15px;color:#1a1a1a;letter-spacing:-0.358px;">Balance</span>
<span class="t" style="left:1185.62px;top:444px;font-size:12px;line-height:15px;color:#1a1a1a;letter-spacing:-0.286px;">Receipt</span>
<span class="t" style="left:1186.06px;top:459px;font-size:12px;line-height:15px;color:#1a1a1a;letter-spacing:-0.508px;">Status</span>
<div class="b" style="left:426px;top:481px;width:14px;height:14px;border:2px solid #005d96;border-radius:2px;"></div>
<span class="t" style="left:452.82px;top:484px;font-size:12px;line-height:15px;color:#0b63a0;letter-spacing:-0.511px;">PO-0014470</span>
<svg class="b" style="left:538px;top:484px" width="16" height="12" viewBox="0 0 16 12">
<path d="M1.6 0 H14.4 A1.6 1.6 0 0 1 16 1.6 V11.5 A0.5 0.5 0 0 1 15.5 12 H0.5 A0.5 0.5 0 0 1 0 11.5 V1.6 A1.6 1.6 0 0 1 1.6 0 Z" fill="#005d96"/>
<path d="M1.6 2.3 L8 6.6 L14.4 2.3" fill="none" stroke="#fff" stroke-width="1.4"/>
</svg>
<span class="t" style="left:567.93px;top:484px;font-size:12px;line-height:15px;color:#1a1a1a;letter-spacing:-0.225px;">08/20/2020</span>
<span class="t" style="left:642.23px;top:484px;font-size:12px;line-height:15px;color:#1a1a1a;letter-spacing:-0.225px;">08/27/2020</span>
<span class="t" style="left:716.13px;top:484px;font-size:12px;line-height:15px;color:#1a1a1a;letter-spacing:-0.248px;">Olivia</span>
<span class="t" style="left:864.67px;top:484px;font-size:12px;line-height:15px;color:#1a1a1a;letter-spacing:-0.847px;">$240.00</span>
<span class="t" style="left:964.57px;top:484px;font-size:12px;line-height:15px;color:#1a1a1a;letter-spacing:-0.883px;">$0.00</span>
<span class="t" style="left:1038.47px;top:484px;font-size:12px;line-height:15px;color:#1a1a1a;letter-spacing:-0.847px;">$240.00</span>
<span class="t" style="left:1112.78px;top:476px;font-size:12px;line-height:15px;color:#f47e0c;letter-spacing:0.120px;">Awaiting</span>
<span class="t" style="left:1112.78px;top:491px;font-size:12px;line-height:15px;color:#f47e0c;letter-spacing:0.077px;">Acknowledg</span>
<span class="t" style="left:1260.58px;top:484px;font-size:12px;line-height:15px;color:#1a1a1a;letter-spacing:-0.417px;">Ari</span>
<span class="t" style="left:1333.66px;top:484px;font-size:12px;line-height:15px;color:#0b63a0;letter-spacing:-0.302px;">SO-0031861</span>
<div class="b" style="left:426px;top:512px;width:14px;height:14px;border:2px solid #005d96;border-radius:2px;"></div>
<span class="t" style="left:452.82px;top:515px;font-size:12px;line-height:15px;color:#0b63a0;letter-spacing:-0.500px;">PO-0014449</span>
<svg class="b" style="left:538px;top:515px" width="16" height="12" viewBox="0 0 16 12">
<path d="M1.6 0 H14.4 A1.6 1.6 0 0 1 16 1.6 V11.5 A0.5 0.5 0 0 1 15.5 12 H0.5 A0.5 0.5 0 0 1 0 11.5 V1.6 A1.6 1.6 0 0 1 1.6 0 Z" fill="#005d96"/>
<path d="M1.6 2.3 L8 6.6 L14.4 2.3" fill="none" stroke="#fff" stroke-width="1.4"/>
</svg>
<span class="t" style="left:567.93px;top:515px;font-size:12px;line-height:15px;color:#1a1a1a;letter-spacing:-0.225px;">08/21/2020</span>
<span class="t" style="left:642.23px;top:515px;font-size:12px;line-height:15px;color:#1a1a1a;letter-spacing:-0.225px;">08/22/2020</span>
<span class="t" style="left:716.68px;top:515px;font-size:12px;line-height:15px;color:#1a1a1a;letter-spacing:-0.284px;">Arish</span>
<span class="t" style="left:864.67px;top:515px;font-size:12px;line-height:15px;color:#1a1a1a;letter-spacing:-0.847px;">$100.00</span>
<span class="t" style="left:964.57px;top:515px;font-size:12px;line-height:15px;color:#1a1a1a;letter-spacing:-0.883px;">$0.00</span>
<span class="t" style="left:1038.47px;top:515px;font-size:12px;line-height:15px;color:#1a1a1a;letter-spacing:-0.847px;">$100.00</span>
<span class="t" style="left:1112.78px;top:507px;font-size:12px;line-height:15px;color:#f47e0c;letter-spacing:0.120px;">Awaiting</span>
<span class="t" style="left:1112.78px;top:522px;font-size:12px;line-height:15px;color:#f47e0c;letter-spacing:0.077px;">Acknowledg</span>
<div class="b" style="left:426px;top:542px;width:14px;height:14px;border:2px solid #005d96;border-radius:2px;"></div>
<span class="t" style="left:452.82px;top:545px;font-size:12px;line-height:15px;color:#0b63a0;letter-spacing:-0.496px;">PO-0014412</span>
<svg class="b" style="left:538px;top:545px" width="16" height="12" viewBox="0 0 16 12">
<path d="M1.6 0 H14.4 A1.6 1.6 0 0 1 16 1.6 V11.5 A0.5 0.5 0 0 1 15.5 12 H0.5 A0.5 0.5 0 0 1 0 11.5 V1.6 A1.6 1.6 0 0 1 1.6 0 Z" fill="#005d96"/>
<path d="M1.6 2.3 L8 6.6 L14.4 2.3" fill="none" stroke="#fff" stroke-width="1.4"/>
</svg>
<span class="t" style="left:567.93px;top:545px;font-size:12px;line-height:15px;color:#1a1a1a;letter-spacing:-0.225px;">08/18/2020</span>
<span class="t" style="left:642.23px;top:545px;font-size:12px;line-height:15px;color:#1a1a1a;letter-spacing:-0.225px;">08/19/2020</span>
<span class="t" style="left:716.65px;top:545px;font-size:12px;line-height:15px;color:#1a1a1a;letter-spacing:-0.548px;">Vendor3</span>
<span class="t" style="left:864.67px;top:545px;font-size:12px;line-height:15px;color:#1a1a1a;letter-spacing:-0.883px;">$0.00</span>
<span class="t" style="left:964.57px;top:545px;font-size:12px;line-height:15px;color:#1a1a1a;letter-spacing:-0.883px;">$0.00</span>
<span class="t" style="left:1038.47px;top:545px;font-size:12px;line-height:15px;color:#1a1a1a;letter-spacing:-0.883px;">$0.00</span>
<span class="t" style="left:1112.78px;top:537px;font-size:12px;line-height:15px;color:#f47e0c;letter-spacing:0.120px;">Awaiting</span>
<span class="t" style="left:1112.78px;top:552px;font-size:12px;line-height:15px;color:#f47e0c;letter-spacing:0.077px;">Acknowledg</span>
<div class="b" style="left:426px;top:572px;width:14px;height:14px;border:2px solid #005d96;border-radius:2px;"></div>
<span class="t" style="left:452.82px;top:575px;font-size:12px;line-height:15px;color:#0b63a0;letter-spacing:-0.524px;">PO-0014204</span>
<span class="t" style="left:567.93px;top:575px;font-size:12px;line-height:15px;color:#1a1a1a;letter-spacing:-0.225px;">06/25/2020</span>
<span class="t" style="left:642.23px;top:575px;font-size:12px;line-height:15px;color:#1a1a1a;letter-spacing:-0.225px;">06/26/2020</span>
<span class="t" style="left:716.13px;top:575px;font-size:12px;line-height:15px;color:#1a1a1a;letter-spacing:-0.265px;">Ophelia</span>
<span class="t" style="left:864.67px;top:575px;font-size:12px;line-height:15px;color:#1a1a1a;letter-spacing:-0.883px;">$0.00</span>
<span class="t" style="left:964.57px;top:575px;font-size:12px;line-height:15px;color:#1a1a1a;letter-spacing:-0.883px;">$0.00</span>
<span class="t" style="left:1038.47px;top:575px;font-size:12px;line-height:15px;color:#1a1a1a;letter-spacing:-0.883px;">$0.00</span>
<span class="t" style="left:1112.78px;top:567px;font-size:12px;line-height:15px;color:#f47e0c;letter-spacing:0.120px;">Awaiting</span>
<span class="t" style="left:1112.78px;top:582px;font-size:12px;line-height:15px;color:#f47e0c;letter-spacing:0.077px;">Acknowledg</span>
<div class="b" style="left:426px;top:602px;width:14px;height:14px;border:2px solid #005d96;border-radius:2px;"></div>
<span class="t" style="left:452.82px;top:605px;font-size:12px;line-height:15px;color:#0b63a0;letter-spacing:-0.496px;">PO-0014022</span>
<span class="t" style="left:567.93px;top:605px;font-size:12px;line-height:15px;color:#1a1a1a;letter-spacing:-0.225px;">06/11/2020</span>
<span class="t" style="left:642.23px;top:605px;font-size:12px;line-height:15px;color:#1a1a1a;letter-spacing:-0.225px;">06/12/2020</span>
<span class="t" style="left:716.68px;top:605px;font-size:12px;line-height:15px;color:#1a1a1a;letter-spacing:-0.284px;">Arish</span>
<span class="t" style="left:864.67px;top:605px;font-size:12px;line-height:15px;color:#1a1a1a;letter-spacing:-0.736px;">$1,100.00</span>
<span class="t" style="left:964.57px;top:605px;font-size:12px;line-height:15px;color:#1a1a1a;letter-spacing:-0.883px;">$0.00</span>
<span class="t" style="left:1038.47px;top:605px;font-size:12px;line-height:15px;color:#1a1a1a;letter-spacing:-0.736px;">$1,100.00</span>
<span class="t" style="left:1112.78px;top:597px;font-size:12px;line-height:15px;color:#f47e0c;letter-spacing:0.120px;">Awaiting</span>
<span class="t" style="left:1112.78px;top:612px;font-size:12px;line-height:15px;color:#f47e0c;letter-spacing:0.077px;">Acknowledg</span>
<span class="t" style="left:1260.58px;top:605px;font-size:12px;line-height:15px;color:#1a1a1a;letter-spacing:-0.417px;">Ari</span>
<span class="t" style="left:1333.66px;top:605px;font-size:12px;line-height:15px;color:#0b63a0;letter-spacing:-0.309px;">SO-0030536</span>
<div class="b" style="left:426px;top:632px;width:14px;height:14px;border:2px solid #005d96;border-radius:2px;"></div>
<span class="t" style="left:452.82px;top:635px;font-size:12px;line-height:15px;color:#0b63a0;letter-spacing:-0.500px;">PO-0013179</span>
<span class="t" style="left:567.93px;top:635px;font-size:12px;line-height:15px;color:#1a1a1a;letter-spacing:-0.225px;">01/27/2020</span>
<span class="t" style="left:642.23px;top:635px;font-size:12px;line-height:15px;color:#1a1a1a;letter-spacing:-0.225px;">01/28/2020</span>
<span class="t" style="left:716.68px;top:635px;font-size:12px;line-height:15px;color:#1a1a1a;letter-spacing:-0.464px;word-spacing:0.60px;">Arina 23</span>
<span class="t" style="left:864.67px;top:635px;font-size:12px;line-height:15px;color:#1a1a1a;letter-spacing:-0.861px;">$10.00</span>
<span class="t" style="left:964.57px;top:635px;font-size:12px;line-height:15px;color:#1a1a1a;letter-spacing:-0.883px;">$0.00</span>
<span class="t" style="left:1038.47px;top:635px;font-size:12px;line-height:15px;color:#1a1a1a;letter-spacing:-0.861px;">$10.00</span>
<span class="t" style="left:1112.78px;top:627px;font-size:12px;line-height:15px;color:#f47e0c;letter-spacing:0.120px;">Awaiting</span>
<span class="t" style="left:1112.78px;top:642px;font-size:12px;line-height:15px;color:#f47e0c;letter-spacing:0.077px;">Acknowledg</span>
<div class="b" style="left:426px;top:662px;width:14px;height:14px;border:2px solid #005d96;border-radius:2px;"></div>
<span class="t" style="left:452.82px;top:665px;font-size:12px;line-height:15px;color:#0b63a0;letter-spacing:-0.524px;">PO-0013174</span>
<span class="t" style="left:567.93px;top:665px;font-size:12px;line-height:15px;color:#1a1a1a;letter-spacing:-0.225px;">01/27/2020</span>
<span class="t" style="left:642.23px;top:665px;font-size:12px;line-height:15px;color:#1a1a1a;letter-spacing:-0.225px;">01/28/2020</span>
<span class="t" style="left:716.68px;top:665px;font-size:12px;line-height:15px;color:#1a1a1a;letter-spacing:-0.284px;">Arish</span>
<span class="t" style="left:864.67px;top:665px;font-size:12px;line-height:15px;color:#1a1a1a;letter-spacing:-0.883px;">$0.00</span>
<span class="t" style="left:964.57px;top:665px;font-size:12px;line-height:15px;color:#1a1a1a;letter-spacing:-0.883px;">$0.00</span>
<span class="t" style="left:1038.47px;top:665px;font-size:12px;line-height:15px;color:#1a1a1a;letter-spacing:-0.883px;">$0.00</span>
<span class="t" style="left:1112.78px;top:657px;font-size:12px;line-height:15px;color:#f47e0c;letter-spacing:0.120px;">Awaiting</span>
<span class="t" style="left:1112.78px;top:672px;font-size:12px;line-height:15px;color:#f47e0c;letter-spacing:0.077px;">Acknowledg</span>
<div class="b" style="left:426px;top:692px;width:14px;height:14px;border:2px solid #005d96;border-radius:2px;"></div>
<span class="t" style="left:452.82px;top:695px;font-size:12px;line-height:15px;color:#0b63a0;letter-spacing:-0.504px;">PO-0013173</span>
<span class="t" style="left:567.93px;top:695px;font-size:12px;line-height:15px;color:#1a1a1a;letter-spacing:-0.225px;">01/27/2020</span>
<span class="t" style="left:642.23px;top:695px;font-size:12px;line-height:15px;color:#1a1a1a;letter-spacing:-0.225px;">01/28/2020</span>
<span class="t" style="left:716.68px;top:695px;font-size:12px;line-height:15px;color:#1a1a1a;letter-spacing:-0.284px;">Arish</span>
<span class="t" style="left:864.67px;top:695px;font-size:12px;line-height:15px;color:#1a1a1a;letter-spacing:-0.883px;">$0.00</span>
<span class="t" style="left:964.57px;top:695px;font-size:12px;line-height:15px;color:#1a1a1a;letter-spacing:-0.883px;">$0.00</span>
<span class="t" style="left:1038.47px;top:695px;font-size:12px;line-height:15px;color:#1a1a1a;letter-spacing:-0.883px;">$0.00</span>
<span class="t" style="left:1112.78px;top:687px;font-size:12px;line-height:15px;color:#f47e0c;letter-spacing:0.120px;">Awaiting</span>
<span class="t" style="left:1112.78px;top:702px;font-size:12px;line-height:15px;color:#f47e0c;letter-spacing:0.077px;">Acknowledg</span>
<div class="b" style="left:426px;top:722px;width:14px;height:14px;border:2px solid #005d96;border-radius:2px;"></div>
<span class="t" style="left:452.82px;top:725px;font-size:12px;line-height:15px;color:#0b63a0;letter-spacing:-0.500px;">PO-0013159</span>
<span class="t" style="left:567.93px;top:725px;font-size:12px;line-height:15px;color:#1a1a1a;letter-spacing:-0.225px;">01/23/2020</span>
<span class="t" style="left:642.23px;top:725px;font-size:12px;line-height:15px;color:#1a1a1a;letter-spacing:-0.225px;">01/24/2020</span>
<span class="t" style="left:715.72px;top:717px;font-size:12px;line-height:15px;color:#1a1a1a;letter-spacing:-0.022px;">Helen</span>
<span class="t" style="left:716.65px;top:732px;font-size:12px;line-height:15px;color:#1a1a1a;letter-spacing:-0.509px;">Vendor</span>
<span class="t" style="left:864.67px;top:725px;font-size:12px;line-height:15px;color:#1a1a1a;letter-spacing:-0.883px;">$0.00</span>
<span class="t" style="left:964.57px;top:725px;font-size:12px;line-height:15px;color:#1a1a1a;letter-spacing:-0.883px;">$0.00</span>
<span class="t" style="left:1038.47px;top:725px;font-size:12px;line-height:15px;color:#1a1a1a;letter-spacing:-0.883px;">$0.00</span>
<span class="t" style="left:1112.78px;top:717px;font-size:12px;line-height:15px;color:#f47e0c;letter-spacing:0.120px;">Awaiting</span>
<span class="t" style="left:1112.78px;top:732px;font-size:12px;line-height:15px;color:#f47e0c;letter-spacing:0.077px;">Acknowledg</span>
<div class="b" style="left:426px;top:752px;width:14px;height:14px;border:2px solid #005d96;border-radius:2px;"></div>
<span class="t" style="left:452.82px;top:755px;font-size:12px;line-height:15px;color:#0b63a0;letter-spacing:-0.496px;">PO-0013117</span>
<span class="t" style="left:567.93px;top:755px;font-size:12px;line-height:15px;color:#1a1a1a;letter-spacing:-0.225px;">01/20/2020</span>
<span class="t" style="left:642.23px;top:755px;font-size:12px;line-height:15px;color:#1a1a1a;letter-spacing:-0.225px;">01/21/2020</span>
<span class="t" style="left:716.66px;top:747px;font-size:12px;line-height:15px;color:#1a1a1a;letter-spacing:-0.158px;">vendor_anto</span>
<span class="t" style="left:715.90px;top:762px;font-size:12px;line-height:15px;color:#1a1a1a;">n</span>
<span class="t" style="left:864.67px;top:755px;font-size:12px;line-height:15px;color:#1a1a1a;letter-spacing:-0.883px;">$0.00</span>
<span class="t" style="left:964.57px;top:755px;font-size:12px;line-height:15px;color:#1a1a1a;letter-spacing:-0.883px;">$0.00</span>
<span class="t" style="left:1038.47px;top:755px;font-size:12px;line-height:15px;color:#1a1a1a;letter-spacing:-0.883px;">$0.00</span>
<span class="t" style="left:1112.78px;top:747px;font-size:12px;line-height:15px;color:#f47e0c;letter-spacing:0.120px;">Awaiting</span>
<span class="t" style="left:1112.78px;top:762px;font-size:12px;line-height:15px;color:#f47e0c;letter-spacing:0.077px;">Acknowledg</span>
<div class="b" style="left:426px;top:782px;width:14px;height:14px;border:2px solid #005d96;border-radius:2px;"></div>
<span class="t" style="left:452.82px;top:785px;font-size:12px;line-height:15px;color:#0b63a0;letter-spacing:-0.496px;">PO-0013092</span>
<span class="t" style="left:567.93px;top:785px;font-size:12px;line-height:15px;color:#1a1a1a;letter-spacing:-0.225px;">01/16/2020</span>
<span class="t" style="left:642.23px;top:785px;font-size:12px;line-height:15px;color:#1a1a1a;letter-spacing:-0.225px;">01/17/2020</span>
<span class="t" style="left:715.72px;top:777px;font-size:12px;line-height:15px;color:#1a1a1a;letter-spacing:-0.022px;">Helen</span>
<span class="t" style="left:716.65px;top:792px;font-size:12px;line-height:15px;color:#1a1a1a;letter-spacing:-0.509px;">Vendor</span>
<span class="t" style="left:864.67px;top:785px;font-size:12px;line-height:15px;color:#1a1a1a;letter-spacing:-0.861px;">$32.40</span>
<span class="t" style="left:964.57px;top:785px;font-size:12px;line-height:15px;color:#1a1a1a;letter-spacing:-0.883px;">$0.00</span>
<span class="t" style="left:1038.47px;top:785px;font-size:12px;line-height:15px;color:#1a1a1a;letter-spacing:-0.861px;">$32.40</span>
<span class="t" style="left:1112.78px;top:777px;font-size:12px;line-height:15px;color:#f47e0c;letter-spacing:0.120px;">Awaiting</span>
<span class="t" style="left:1112.78px;top:792px;font-size:12px;line-height:15px;color:#f47e0c;letter-spacing:0.077px;">Acknowledg</span>
<div class="b" style="left:426px;top:812px;width:14px;height:14px;border:2px solid #005d96;border-radius:2px;"></div>
<span class="t" style="left:452.82px;top:815px;font-size:12px;line-height:15px;color:#0b63a0;letter-spacing:-0.498px;">PO-0013091</span>
<span class="t" style="left:567.93px;top:815px;font-size:12px;line-height:15px;color:#1a1a1a;letter-spacing:-0.225px;">01/16/2020</span>
<span class="t" style="left:642.23px;top:815px;font-size:12px;line-height:15px;color:#1a1a1a;letter-spacing:-0.225px;">01/17/2020</span>
<span class="t" style="left:715.72px;top:807px;font-size:12px;line-height:15px;color:#1a1a1a;letter-spacing:-0.022px;">Helen</span>
<span class="t" style="left:716.65px;top:822px;font-size:12px;line-height:15px;color:#1a1a1a;letter-spacing:-0.509px;">Vendor</span>
<span class="t" style="left:864.67px;top:815px;font-size:12px;line-height:15px;color:#1a1a1a;letter-spacing:-0.813px;">$194.40</span>
<span class="t" style="left:964.57px;top:815px;font-size:12px;line-height:15px;color:#1a1a1a;letter-spacing:-0.883px;">$0.00</span>
<span class="t" style="left:1038.47px;top:815px;font-size:12px;line-height:15px;color:#1a1a1a;letter-spacing:-0.813px;">$194.40</span>
<span class="t" style="left:1112.78px;top:807px;font-size:12px;line-height:15px;color:#f47e0c;letter-spacing:0.120px;">Awaiting</span>
<span class="t" style="left:1112.78px;top:822px;font-size:12px;line-height:15px;color:#f47e0c;letter-spacing:0.077px;">Acknowledg</span>
<span class="t" style="left:1259.92px;top:815px;font-size:12px;line-height:15px;color:#1a1a1a;letter-spacing:-0.234px;word-spacing:0.33px;">Helen Custor</span>
<span class="t" style="left:1334.52px;top:815px;font-size:12px;line-height:15px;color:#0b63a0;letter-spacing:-1.114px;word-spacing:1.20px;font-weight:700;">4 ORDERS</span>
<div class="b" style="left:426px;top:842px;width:14px;height:14px;border:2px solid #005d96;border-radius:2px;"></div>
<span class="t" style="left:452.82px;top:845px;font-size:12px;line-height:15px;color:#0b63a0;letter-spacing:-0.500px;">PO-0013069</span>
<span class="t" style="left:567.93px;top:845px;font-size:12px;line-height:15px;color:#1a1a1a;letter-spacing:-0.225px;">01/16/2020</span>
<span class="t" style="left:642.23px;top:845px;font-size:12px;line-height:15px;color:#1a1a1a;letter-spacing:-0.225px;">01/17/2020</span>
<span class="t" style="left:716.68px;top:845px;font-size:12px;line-height:15px;color:#1a1a1a;letter-spacing:-0.284px;">Arish</span>
<span class="t" style="left:864.67px;top:845px;font-size:12px;line-height:15px;color:#1a1a1a;letter-spacing:-0.883px;">$0.00</span>
<span class="t" style="left:964.57px;top:845px;font-size:12px;line-height:15px;color:#1a1a1a;letter-spacing:-0.883px;">$0.00</span>
<span class="t" style="left:1038.47px;top:845px;font-size:12px;line-height:15px;color:#1a1a1a;letter-spacing:-0.883px;">$0.00</span>
<span class="t" style="left:1112.78px;top:837px;font-size:12px;line-height:15px;color:#f47e0c;letter-spacing:0.120px;">Awaiting</span>
<span class="t" style="left:1112.78px;top:852px;font-size:12px;line-height:15px;color:#f47e0c;letter-spacing:0.077px;">Acknowledg</span>
<div class="b" style="left:426px;top:872px;width:14px;height:14px;border:2px solid #005d96;border-radius:2px;"></div>
<span class="t" style="left:452.82px;top:875px;font-size:12px;line-height:15px;color:#0b63a0;letter-spacing:-0.498px;">PO-0013051</span>
<svg class="b" style="left:538px;top:875px" width="16" height="12" viewBox="0 0 16 12">
<path d="M1.6 0 H14.4 A1.6 1.6 0 0 1 16 1.6 V11.5 A0.5 0.5 0 0 1 15.5 12 H0.5 A0.5 0.5 0 0 1 0 11.5 V1.6 A1.6 1.6 0 0 1 1.6 0 Z" fill="#005d96"/>
<path d="M1.6 2.3 L8 6.6 L14.4 2.3" fill="none" stroke="#fff" stroke-width="1.4"/>
</svg>
<span class="t" style="left:567.93px;top:875px;font-size:12px;line-height:15px;color:#1a1a1a;letter-spacing:-0.225px;">01/15/2020</span>
<span class="t" style="left:642.23px;top:875px;font-size:12px;line-height:15px;color:#1a1a1a;letter-spacing:-0.225px;">01/16/2020</span>
<span class="t" style="left:716.68px;top:875px;font-size:12px;line-height:15px;color:#1a1a1a;letter-spacing:-0.284px;">Arish</span>
<span class="t" style="left:864.67px;top:875px;font-size:12px;line-height:15px;color:#1a1a1a;letter-spacing:-0.861px;">$23.00</span>
<span class="t" style="left:964.57px;top:875px;font-size:12px;line-height:15px;color:#1a1a1a;letter-spacing:-0.883px;">$0.00</span>
<span class="t" style="left:1038.47px;top:875px;font-size:12px;line-height:15px;color:#1a1a1a;letter-spacing:-0.861px;">$23.00</span>
<span class="t" style="left:1112.78px;top:867px;font-size:12px;line-height:15px;color:#f47e0c;letter-spacing:0.120px;">Awaiting</span>
<span class="t" style="left:1112.78px;top:882px;font-size:12px;line-height:15px;color:#f47e0c;letter-spacing:0.077px;">Acknowledg</span>
<div class="b" style="left:426px;top:902px;width:14px;height:14px;border:2px solid #005d96;border-radius:2px;"></div>
<span class="t" style="left:452.82px;top:905px;font-size:12px;line-height:15px;color:#0b63a0;letter-spacing:-0.498px;">PO-0013041</span>
<span class="t" style="left:567.93px;top:905px;font-size:12px;line-height:15px;color:#1a1a1a;letter-spacing:-0.225px;">01/14/2020</span>
<span class="t" style="left:642.23px;top:905px;font-size:12px;line-height:15px;color:#1a1a1a;letter-spacing:-0.225px;">01/15/2020</span>
<span class="t" style="left:716.13px;top:905px;font-size:12px;line-height:15px;color:#1a1a1a;letter-spacing:-0.248px;">Olivia</span>
<span class="t" style="left:864.67px;top:905px;font-size:12px;line-height:15px;color:#1a1a1a;letter-spacing:-0.883px;">$0.00</span>
<span class="t" style="left:964.57px;top:905px;font-size:12px;line-height:15px;color:#1a1a1a;letter-spacing:-0.883px;">$0.00</span>
<span class="t" style="left:1038.47px;top:905px;font-size:12px;line-height:15px;color:#1a1a1a;letter-spacing:-0.883px;">$0.00</span>
<span class="t" style="left:1112.78px;top:897px;font-size:12px;line-height:15px;color:#f47e0c;letter-spacing:0.120px;">Awaiting</span>
<span class="t" style="left:1112.78px;top:912px;font-size:12px;line-height:15px;color:#f47e0c;letter-spacing:0.077px;">Acknowledg</span>
<div class="b" style="left:426px;top:932px;width:14px;height:14px;border:2px solid #005d96;border-radius:2px;"></div>
<span class="t" style="left:715.72px;top:927px;font-size:12px;line-height:15px;color:#1a1a1a;letter-spacing:-0.022px;">Helen</span>
<span class="t" style="left:716.65px;top:942px;font-size:12px;line-height:15px;color:#1a1a1a;letter-spacing:-0.509px;">Vendor</span>
<span class="t" style="left:864.67px;top:935px;font-size:12px;line-height:15px;color:#1a1a1a;letter-spacing:-0.883px;">$0.00</span>
<span class="t" style="left:964.57px;top:935px;font-size:12px;line-height:15px;color:#1a1a1a;letter-spacing:-0.883px;">$0.00</span>
<span class="t" style="left:1038.47px;top:935px;font-size:12px;line-height:15px;color:#1a1a1a;letter-spacing:-0.883px;">$0.00</span>
<span class="t" style="left:1112.78px;top:927px;font-size:12px;line-height:15px;color:#f47e0c;letter-spacing:0.120px;">Awaiting</span>
<span class="t" style="left:1112.78px;top:942px;font-size:12px;line-height:15px;color:#f47e0c;letter-spacing:0.077px;">Acknowledg</span>
<svg class="b" style="left:0;top:0" width="1641" height="937" viewBox="0 0 1641 937">
<line x1="1136.9" y1="473" x2="977.3" y2="188" stroke="#ff0000" stroke-width="3.2"/>
<path d="M970.5 175.9 L981.9 186.8 L974.1 191 Z" fill="#ff0000"/>
<rect x="1107.6" y="473.5" width="78" height="35.7" fill="none" stroke="#ff0000" stroke-width="3" stroke-linejoin="round"/>
</svg>
</body></html>
